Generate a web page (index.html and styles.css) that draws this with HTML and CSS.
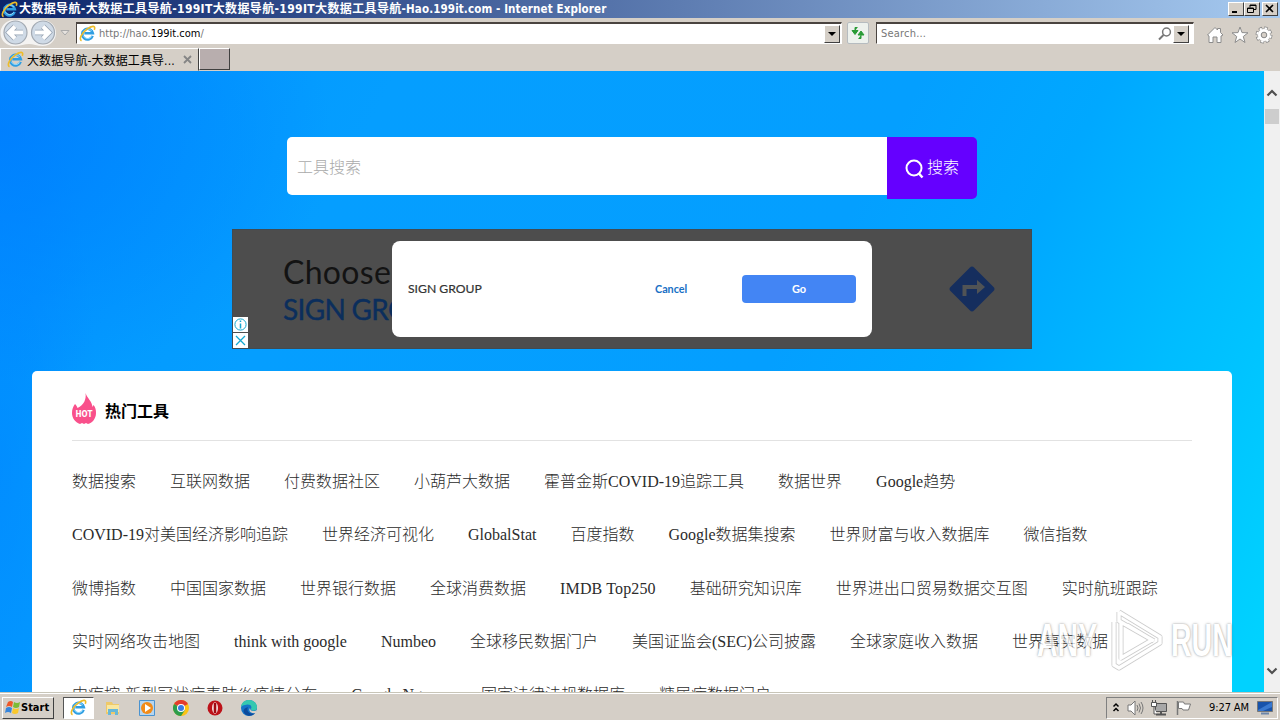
FILE: index.html
```
<!DOCTYPE html>
<html lang="zh-CN">
<head>
    <meta charset="UTF-8">
    <title>大数据导航-大数据工具导航-199IT大数据导航</title>
    <link rel="stylesheet" href="styles.css">
</head>
<body>
    <!-- shared symbols -->
    <svg class="defs" width="0" height="0">
        <symbol id="ie" viewBox="0 0 16 16">
            <path d="M12.8 10.2A5 5 0 1 1 13 7.800H5" fill="none" stroke="#2f9ee2" stroke-width="2.500"/>
            <path d="M12 10.800A4.600 4.600 0 0 1 4 10M4 6.500a4.800 4.800 0 0 1 8-1" fill="none" stroke="#9be0ff" stroke-width="0.9"/>
            <path d="M2.400 14.800C-.5 13.500 2.500 7.500 7.500 3.800S16 .5 14.400 4.600" fill="none" stroke="#eebc28" stroke-width="1.500"/>
        </symbol>
    </svg>

    <div class="titlebar">
        <svg width="17" height="17"><use href="#ie"/></svg>
        <span class="title"><span class="zh">大数据导航-大数据工具导航-199IT大数据导航-199IT大数据工具导航</span>-Hao.199it.com - Internet Explorer</span>
        <div class="window-buttons">
            <button><svg width="12" height="10"><path d="M2 8h5" stroke="#000" stroke-width="2"/></svg></button>
            <button><svg width="12" height="10"><path d="M4 3.500V1h6v4.500H8M4 1.500h6M1.500 4h6v4.500h-6zM1.500 4.500h6" fill="none" stroke="#000"/></svg></button>
            <button class="close"><svg width="12" height="10"><path d="M2 1l7 7M9 1L2 8" stroke="#000" stroke-width="1.600"/></svg></button>
        </div>
    </div>

    <div class="toolbar">
        <div class="nav">
            <svg width="56" height="28" viewBox="0 0 56 28">
                <path d="M13 1h30a13 13 0 0 1 0 26c-6 0-10-2-14-2s-9 2-15 2A13 13 0 0 1 13 1z" fill="#f4f3f2"/>
                <g fill="#cfdae6" stroke="#a2a9b2" stroke-width="1.200"><circle cx="15.500" cy="13.500" r="11.500"/><circle cx="43" cy="13.500" r="11.500"/></g>
                <g fill="none" stroke="#95a2b2" stroke-width="5.500"><path d="M23 13.500H10M15 7.500l-6 6 6 6M35 13.500h13M43 7.500l6 6-6 6"/></g>
                <g fill="none" stroke="#fff" stroke-width="4"><path d="M23 13.500H10M15 7.500l-6 6 6 6M35 13.500h13M43 7.500l6 6-6 6"/></g>
            </svg>
            <svg width="10" height="8"><path d="M1 1.500h8L5 6z" fill="#e7e3df" stroke="#aaa"/></svg>
        </div>
        <div class="address">
            <svg width="17" height="17"><use href="#ie"/></svg>
            <span>http://hao.<b>199it.com</b>/</span>
            <i class="drop"></i>
        </div>
        <div class="refresh">
            <svg width="16" height="16"><path d="M7.500 2.500H5V6M2 5.500l3 4 3-4zM8.500 13.500H11V10M8 10l3-4 3 4z" fill="#299b36" stroke="#299b36"/></svg>
        </div>
        <div class="search-field">
            <span>Search...</span>
            <svg width="14" height="14"><circle cx="8.500" cy="5" r="3.900" fill="none" stroke="#777" stroke-width="1.500"/><path d="M5.500 8L1 12.500" stroke="#777" stroke-width="2"/></svg>
            <i class="drop"></i>
        </div>
        <div class="tools">
            <svg width="18" height="18"><path d="M1.500 9L9 1.500 11.500 4V2.500h3v4L17 9l-2 1v6.500h-4V11H7v5.500H3V10z" fill="#fff" stroke="#8c8c8c"/></svg>
            <svg width="18" height="18"><path d="M9 1l2 5.600 6 .2-4.700 3.700 1.700 6L9 13l-5 3.500 1.700-6L1 6.800l6-.2z" fill="#fff" stroke="#8c8c8c"/></svg>
            <svg width="18" height="18"><circle cx="9" cy="9" r="6.700" fill="none" stroke="#858585" stroke-width="3.500" stroke-dasharray="3.300 1.960"/><circle cx="9" cy="9" r="6.500" fill="#fff" stroke="#999" stroke-width=".7"/><circle cx="9" cy="9" r="6.700" fill="none" stroke="#fff" stroke-width="2" stroke-dasharray="2.300 2.960" stroke-dashoffset="-.5"/><circle cx="9" cy="9" r="2.800" fill="#d5cfc7" stroke="#858585"/></svg>
        </div>
    </div>

    <div class="tabs">
        <div class="tab">
            <svg width="17" height="17"><use href="#ie"/></svg>
            <span>大数据导航-大数据工具导...</span>
            <svg width="9" height="9"><path d="M1 1l7 7M8 1L1 8" stroke="#858585" stroke-width="1.800"/></svg>
        </div>
        <div class="new-tab"></div>
    </div>

    <div class="view">
        <div class="page">
            <form class="search">
                <input type="text" placeholder="工具搜索">
                <button type="button">
                    <svg width="20" height="20"><circle cx="9" cy="9" r="7.500" fill="none" stroke="#fff" stroke-width="2"/><path d="M13.500 14l4 4.500" stroke="#fff" stroke-width="2.500"/></svg>
                    <span>搜索</span>
                </button>
            </form>

            <div class="ad">
                <div class="ad-text">Choose<br><span>SIGN GROUP</span></div>
                <div class="ad-dialog">
                    <span class="name">SIGN GROUP</span>
                    <span class="cancel">Cancel</span>
                    <span class="go">Go</span>
                </div>
                <svg class="turn" width="46" height="46"><path d="M21 1.500q2-2 4 0l19.500 19.500q2 2 0 4L25 44.500q-2 2-4 0L1.500 25q-2-2 0-4z" fill="#152e5e"/><path d="M15.500 30v-9h14" fill="none" stroke="#505355" stroke-width="4"/><path d="M28 14l8 7-8 7z" fill="#505355"/></svg>
                <div class="ad-marks">
                    <svg width="15" height="15"><circle cx="7.500" cy="7.500" r="5.600" fill="none" stroke="#13a8d1"/><path d="M7.500 6.500v5M7.500 3.500v1.500" stroke="#13a8d1" stroke-width="1.500"/></svg>
                    <svg width="15" height="15"><path d="M3 3l9 9M12 3l-9 9" stroke="#13a8d1" stroke-width="1.300"/></svg>
                </div>
            </div>

            <div class="card">
                <h2>
                    <svg width="24" height="32" viewBox="0 0 24 32">
                        <path d="M13.500 0C15 5 20 8 20.500 14l1-2c2 2 2.500 5 2.500 8 0 6-4 10-8 11l-2-1-2 1-2-1-2 1C3 29 0 25 0 20c0-4 1-6 3-9 1 1 2 2 2.500 4C12 12 14.500 6 13.500 0z" fill="#f9508b"/>
                        <text x="12" y="24" text-anchor="middle" textLength="17" lengthAdjust="spacingAndGlyphs">HOT</text>
                    </svg>
                    <span>热门工具</span>
                </h2>
                <div class="links">
                    <div class="row"><a>数据搜索</a><a>互联网数据</a><a>付费数据社区</a><a>小葫芦大数据</a><a>霍普金斯COVID-19追踪工具</a><a>数据世界</a><a>Google趋势</a></div>
                    <div class="row"><a>COVID-19对美国经济影响追踪</a><a>世界经济可视化</a><a>GlobalStat</a><a>百度指数</a><a>Google数据集搜索</a><a>世界财富与收入数据库</a><a>微信指数</a></div>
                    <div class="row"><a>微博指数</a><a>中国国家数据</a><a>世界银行数据</a><a>全球消费数据</a><a class="imdb">IMDB Top250</a><a>基础研究知识库</a><a>世界进出口贸易数据交互图</a><a>实时航班跟踪</a></div>
                    <div class="row"><a>实时网络攻击地图</a><a>think with google</a><a>Numbeo</a><a>全球移民数据门户</a><a>美国证监会(SEC)公司披露</a><a>全球家庭收入数据</a><a>世界事实数据</a></div>
                    <div class="row"><a>中疾控-新型冠状病毒肺炎疫情分布</a><a>Google Ngram</a><a>国家法律法规数据库</a><a>糖尿病数据门户</a></div>
                </div>
            </div>
        </div>
        <div class="scrollbar">
            <svg width="12" height="8"><path d="M1.500 6.500L6 2l4.500 4.500" fill="none" stroke="#505050" stroke-width="2.200"/></svg>
            <div class="thumb"></div>
            <svg class="down" width="12" height="8"><path d="M1.500 1.500L6 6l4.500-4.500" fill="none" stroke="#505050" stroke-width="2.200"/></svg>
        </div>
    </div>

    <div class="watermark">
        <span>ANY</span>
        <svg width="58" height="64" viewBox="0 0 58 64"><path d="M13 4L54 29v6L13 60l-5-3V14M15 13v37l31-18-25-15M13 4v9l35 20" fill="none" stroke="#bbb" stroke-width="5" stroke-linejoin="round"/><path d="M13 4L54 29v6L13 60l-5-3V14M15 13v37l31-18-25-15M13 4v9l35 20" fill="none" stroke="#fff" stroke-width="3.400"/></svg>
        <span>RUN</span>
    </div>

    <div class="taskbar">
        <div class="start">
            <svg width="16" height="15"><path d="M3 2q3-2 5 0L7 7q-3-2-6 0z" fill="#ef5828"/><path d="M9 2q3 2 6 0l-1 5q-3 2-6 0z" fill="#7dbb35"/><path d="M1 8q3-2 6 0l-1 5q-3-2-6 0z" fill="#3685dc"/><path d="M8 8q3 2 6 0l-1 5q-3 2-6 0z" fill="#fac82c"/></svg>
            Start
        </div>
        <div class="task active"><svg width="17" height="17"><use href="#ie"/></svg></div>
        <div class="task"><svg width="16" height="16"><path d="M1 2h6l1 2h6v10H1z" fill="#eec969"/><path d="M2 5h12v7H2z" fill="#f9e7a0"/><path d="M3 15V9h10v6h-3v-3H6v3z" fill="#68b8d8"/></svg></div>
        <div class="task"><svg width="16" height="16"><path d="M.5.500h15v15H.5z" fill="#b6d5ef" stroke="#4a93d0"/><circle cx="8" cy="8" r="6" fill="#f28b18"/><path d="M6 4l6 4-6 4z" fill="#fff"/></svg></div>
        <div class="task"><svg width="16" height="16"><circle cx="8" cy="8" r="8" fill="#fbc315"/><path d="M8 8L1.070 4A8 8 0 0 1 14.930 4z" fill="#e33b2e"/><path d="M1.070 4A8 8 0 0 0 8 16l4-6-4-2z" fill="#2d9d4c"/><circle cx="8" cy="8" r="4" fill="#fff"/><circle cx="8" cy="8" r="3" fill="#397be4"/></svg></div>
        <div class="task"><svg width="16" height="16"><circle cx="8" cy="8" r="7.500" fill="#bd1219"/><ellipse cx="8" cy="8" rx="3" ry="5.700" fill="#f7dede"/><path d="M8 3v10" stroke="#a00b12" stroke-width="2.500"/></svg></div>
        <div class="task"><svg width="16" height="16"><circle cx="8" cy="8" r="8" fill="#1474c8"/><path d="M0 7C1 0 8-1 12 1c4 2 5 7 3 9-2 1-5 1-5-1 2-5-4-5-6-4-2 0-3 1-4 2z" fill="#35c8b0"/><path d="M7 7c-2 4 2 8 7 6-2 3-7 4-10 1s-1-6 3-7z" fill="#0c4a9b"/><path d="M9 8c0 3 3 4 7 2l-1 3c-5 1-8-2-6-5z" fill="#d5cfc7"/></svg></div>
        <div class="tray">
            <svg width="8" height="12"><path d="M1.500 4.500l2.500-2.500 2.500 2.500M1.500 9l2.500-2.500 2.500 2.500" fill="none" stroke="#000" stroke-width="1.500"/></svg>
            <svg width="17" height="16"><path d="M1 5h3l4-4v14l-4-4H1z" fill="#fff" stroke="#777"/><path d="M10 5q2 3 0 6M12 3.500q3 4.500 0 9M14 2q4 6 0 12" fill="none" stroke="#777"/></svg>
            <svg width="17" height="16"><path d="M4.500 3.500h11v8h-11z" fill="#a7a7a7" stroke="#555"/><path d="M5 14.500h10M10 12v2" stroke="#555" stroke-width="2"/><path d="M.5 2.500h5v4h-5zM3 7v7h3M1.500 0v2M4.500 0v2" fill="#fff" stroke="#555"/></svg>
            <svg width="17" height="16"><path d="M2.500 1v14" stroke="#777" stroke-width="1.500"/><path d="M3.500 2h5l1 2h6l-2 6H8L7 8.500H3.500z" fill="#fff" stroke="#777"/></svg>
            <span class="clock">9:27 AM</span>
            <svg width="16" height="14"><path d="M.5.500h15v10H.5z" fill="#1753ab" stroke="#777"/><path d="M1 9L15 1v5L6 10H1z" fill="#3979d0"/><path d="M4 12.500h8" stroke="#6b85a8" stroke-width="2"/></svg>
        </div>
    </div>
</body>
</html>
```
FILE: styles.css
```
* {
    box-sizing: border-box;
}
body {
    margin: 0;
    width: 1280px;
    height: 720px;
    overflow: hidden;
    display: flex;
    flex-direction: column;
    background: #d5cfc7;
    font-family: "DejaVu Sans Condensed", "DejaVu Sans", "Noto Sans CJK SC", sans-serif;
    font-size: 11px;
    color: #000;
}
svg {
    display: block;
    flex: none;
}
.defs {
    position: absolute;
}
button {
    padding: 0;
    border: 0;
}

/* browser window */
.titlebar {
    height: 18px;
    flex: none;
    display: flex;
    align-items: center;
    padding: 0 2px 0 1px;
    background: linear-gradient(90deg, #0b246a, #a6caf0);
    color: #fff;
}
.title {
    margin-left: 1px;
    font: bold 11.5px/18px "DejaVu Sans Condensed", "Noto Sans CJK SC", sans-serif;
    letter-spacing: 0.12px;
    white-space: nowrap;
}
.title .zh {
    font-size: 12px;
    letter-spacing: 0.36px;
}
.window-buttons {
    margin-left: auto;
    display: flex;
}
.window-buttons button {
    width: 16px;
    height: 14px;
    padding: 1px;
    background: #d5cfc7;
    border: 1px solid;
    border-color: #fff #404040 #404040 #fff;
}
.window-buttons .close {
    margin-left: 2px;
}
.toolbar {
    height: 30px;
    flex: none;
    display: flex;
    align-items: center;
}
.nav {
    width: 76px;
    display: flex;
    align-items: center;
    gap: 4px;
}
.address,
.search-field {
    height: 22px;
    display: flex;
    align-items: center;
    background: #fff;
    border: 1px solid;
    border-color: #4a4440 #fff #fff #4a4440;
    border-top-width: 2px;
    color: #777;
}
.address {
    width: 766px;
    padding: 0 1px 0 2px;
}
.address span {
    margin-left: 3px;
}
.address b {
    font-weight: normal;
    color: #000;
}
.drop {
    width: 16px;
    height: 18px;
    margin-left: auto;
    display: flex;
    align-items: center;
    justify-content: center;
    background: #d5cfc7;
    border: 1px solid;
    border-color: #fff #404040 #404040 #fff;
}
.drop::after {
    content: "";
    border: 4px solid transparent;
    border-top-color: #000;
    border-bottom: 0;
}
.refresh {
    width: 22px;
    height: 22px;
    margin: 0 7px 0 5px;
    display: flex;
    align-items: center;
    justify-content: center;
    background: #edf1ed;
    border: 1px solid #b6bcc0;
    border-radius: 2px;
}
.search-field {
    width: 318px;
    padding: 0 4px;
}
.search-field span {
    letter-spacing: 0.2px;
}
.search-field svg {
    margin-left: auto;
}
.search-field .drop {
    margin-left: 1px;
}
.tools {
    margin-left: 12px;
    padding-top: 4px;
    display: flex;
    gap: 6.5px;
}
.tabs {
    height: 23px;
    flex: none;
    display: flex;
}
.tab {
    width: 199px;
    display: flex;
    align-items: center;
    padding-left: 6px;
    border: 1px solid;
    border-color: #fff #404040 transparent #fff;
}
.tab span {
    width: 154px;
    margin: 0 2px 0 3px;
    font-size: 12px;
    letter-spacing: 0.1px;
    white-space: nowrap;
}
.new-tab {
    width: 31px;
    height: 22px;
    background: #b8aeae;
    border: 1px solid;
    border-color: #fff #404040 #404040 #fff;
}
.view {
    height: 621px;
    flex: none;
    display: flex;
    overflow: hidden;
}
.scrollbar {
    width: 16px;
    padding-top: 18px;
    display: flex;
    flex-direction: column;
    align-items: center;
    background: #f0f0f0;
}
.thumb {
    width: 14px;
    height: 15px;
    margin-top: 12px;
    background: #cdcdcd;
}
.scrollbar .down {
    margin: auto 0 17px;
}

/* page */
.page {
    width: 1264px;
    height: 621px;
    padding-top: 66px;
    overflow: hidden;
    background:
        radial-gradient(ellipse 330px 250px at 0 60px, rgba(0, 122, 255, 0.75), rgba(0, 122, 255, 0)) no-repeat,
        radial-gradient(ellipse 100px 420px at 0 400px, rgba(0, 130, 255, 0.5), rgba(0, 130, 255, 0)) no-repeat,
        linear-gradient(118deg, #0094ff 0%, #059eff 25%, #049fff 58%, #00a8ff 70%, #00bdff 83%, #00d2ff 98%);
}
.search {
    width: 690px;
    height: 62px;
    margin: 0 0 0 287px;
    display: flex;
    align-items: flex-start;
}
.search input {
    width: 600px;
    height: 58px;
    padding: 0 9px 0 10px;
    border: 0;
    border-radius: 5px 0 0 5px;
    font: 300 16px "Noto Sans CJK SC", sans-serif;
}
.search input::placeholder {
    color: #aaa;
}
.search button {
    width: 90px;
    height: 62px;
    display: flex;
    align-items: center;
    justify-content: center;
    gap: 2px;
    background: #6500ff;
    border-radius: 0 5px 5px 0;
    color: #fff;
    font: 300 16px "Noto Sans CJK SC", sans-serif;
}
.search button svg {
    margin-top: 2px;
}
.search button span {
    padding-bottom: 5px;
}
.ad {
    position: relative;
    width: 800px;
    height: 120px;
    margin: 30px 0 0 232px;
    background: #4d4d4d;
    border: 1px solid #404b52;
}
.ad-text {
    width: 159px;
    padding: 24px 0 0 50px;
    overflow: hidden;
    white-space: nowrap;
    font: 32px/36px Lato, sans-serif;
    letter-spacing: 0.3px;
    color: #131313;
}
.ad-text span {
    font-size: 28px;
    letter-spacing: -0.7px;
    -webkit-text-stroke: 0.4px #0b2e5c;
    color: #0b2e5c;
}
.ad-dialog {
    position: absolute;
    left: 159px;
    top: 11px;
    width: 480px;
    height: 96px;
    display: flex;
    align-items: center;
    padding: 0 16px;
    background: #fff;
    border-radius: 8px;
}
.ad-dialog .name {
    width: 247px;
    padding-bottom: 1px;
    font: 12.2px Lato, sans-serif;
    -webkit-text-stroke: 0.2px #333;
    color: #333;
}
.cancel {
    font: bold 10.8px Lato, sans-serif;
    padding-bottom: 2px;
    color: #1870c5;
}
.go {
    width: 114px;
    height: 28px;
    margin-left: auto;
    font: bold 11px/27px Lato, sans-serif;
    text-align: center;
    color: #fff;
    background: #4385f4;
    border-radius: 4px;
}
.turn {
    position: absolute;
    right: 36px;
    top: 36px;
}
.ad-marks {
    position: absolute;
    left: 0;
    bottom: 0;
    display: grid;
    gap: 1px;
}
.ad-marks svg {
    background: #fff;
}
.card {
    width: 1200px;
    height: 400px;
    margin: 22px 0 0 32px;
    padding: 0 40px;
    background: #fff;
    border-radius: 5px;
}
.card h2 {
    height: 70px;
    margin: 0;
    padding-top: 6px;
    display: flex;
    align-items: center;
    gap: 9px;
    border-bottom: 1px solid #e2e2e2;
    font: bold 16px "Noto Sans CJK SC", sans-serif;
}
.card h2 span {
    padding-top: 3px;
}
.card h2 text {
    font: bold 8px "DejaVu Sans", sans-serif;
    fill: #fff;
}
.links {
    padding-top: 14px;
    font: 16px "Liberation Serif", "Noto Sans CJK SC", serif;
    font-weight: 300;
    color: #2b2b2b;
}
.row {
    height: 53.3px;
    display: flex;
    align-items: baseline;
    gap: 34px;
    padding-top: 15px;
    line-height: 24px;
    white-space: nowrap;
}
.row .imdb {
    letter-spacing: 0.14px;
}

.watermark {
    position: absolute;
    left: 1037px;
    top: 608px;
    display: flex;
    align-items: center;
    gap: 7px;
    opacity: 0.75;
    font: bold 46px/64px "Liberation Sans", sans-serif;
    color: #fff;
    text-shadow: 0 0 3px #666;
}
.watermark span {
    width: 62px;
    transform: scaleX(0.62);
    transform-origin: left;
}

/* taskbar */
.taskbar {
    height: 28px;
    flex: none;
    display: flex;
    align-items: center;
    padding: 2px 2px 0;
    border-top: 1px solid #c8c5b8;
    box-shadow: inset 0 1px #fff;
}
.start {
    width: 52px;
    height: 22px;
    margin-right: 9px;
    display: flex;
    align-items: center;
    padding-left: 2px;
    border: 1px solid;
    border-color: #fff #404040 #404040 #fff;
    font-weight: bold;
}
.task {
    width: 31px;
    height: 22px;
    margin-right: 3px;
    display: flex;
    align-items: center;
    justify-content: center;
}
.task.active {
    background: #fff;
    border: 1px solid;
    border-color: #555 #fff #fff #555;
}
.tray {
    width: 172px;
    height: 22px;
    margin-left: auto;
    display: flex;
    align-items: center;
    gap: 7px;
    padding-left: 5px;
    border: 1px solid;
    border-color: #808080 #fff #fff #808080;
}
.clock {
    width: 41px;
    margin: 0 0 0 10px;
    letter-spacing: -0.1px;
    white-space: nowrap;
}
```
